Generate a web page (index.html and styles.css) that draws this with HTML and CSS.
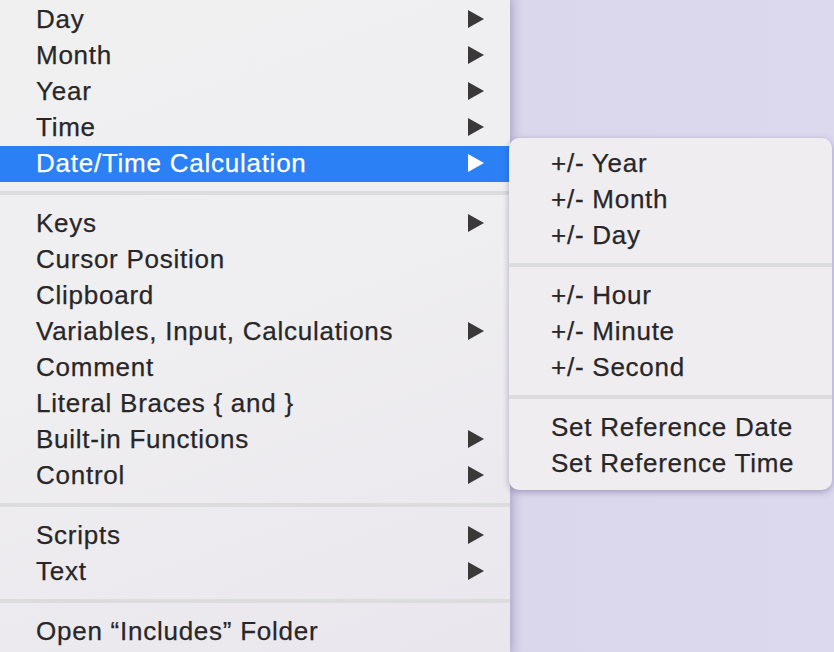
FILE: index.html
```html
<!DOCTYPE html>
<html lang="en">
<head>
  <meta charset="UTF-8" />
  <title>Insert Menu</title>
  <link rel="stylesheet" href="styles.css">
</head>
<body>
  <div class="screen">
    <div class="menu">
      <div class="item sub">Day</div>
      <div class="item sub">Month</div>
      <div class="item sub">Year</div>
      <div class="item sub">Time</div>
      <div class="item sub active">Date/Time Calculation</div>
      <div class="sep"></div>
      <div class="item sub">Keys</div>
      <div class="item">Cursor Position</div>
      <div class="item">Clipboard</div>
      <div class="item sub">Variables, Input, Calculations</div>
      <div class="item">Comment</div>
      <div class="item">Literal Braces { and }</div>
      <div class="item sub">Built-in Functions</div>
      <div class="item sub">Control</div>
      <div class="sep"></div>
      <div class="item sub">Scripts</div>
      <div class="item sub">Text</div>
      <div class="sep"></div>
      <div class="item">Open “Includes” Folder</div>
    </div>
    <div class="desk">
      <div class="submenu">
        <div class="item">+/- Year</div>
        <div class="item">+/- Month</div>
        <div class="item">+/- Day</div>
        <div class="sep"></div>
        <div class="item">+/- Hour</div>
        <div class="item">+/- Minute</div>
        <div class="item">+/- Second</div>
        <div class="sep"></div>
        <div class="item">Set Reference Date</div>
        <div class="item">Set Reference Time</div>
      </div>
    </div>
  </div>
</body>
</html>
```

FILE: styles.css
```css
body {
  margin: 0;
  font-family: 'Liberation Sans', Arial, sans-serif;
  overflow: hidden;
}

.screen {
  display: flex;
  width: 834px;
  height: 652px;
  background-color: #dad6ec;
}

.menu {
  width: 510px;
  flex-shrink: 0;
  padding-top: 2px;
  box-sizing: border-box;
  background: linear-gradient(160deg, #f1f0f1 0%, #efeef0 45%, #e9e7ed 100%);
  box-shadow: 2px 0 8px rgba(60, 50, 110, 0.25);
  position: relative;
  z-index: 1;
}

.desk {
  flex: 1;
  position: relative;
  background: linear-gradient(90deg, #d2cde6 0px, #dad6ec 14px, #dcd8ee 100%);
}

.item {
  height: 36px;
  line-height: 34px;
  padding-left: 36px;
  font-size: 26px;
  letter-spacing: 0.75px;
  color: #282627;
  -webkit-text-stroke: 0.25px #282627;
  position: relative;
  white-space: nowrap;
}

.sub::after {
  content: "";
  position: absolute;
  left: 468px;
  top: 8px;
  border-left: 16px solid #3a3839;
  border-top: 9px solid transparent;
  border-bottom: 9px solid transparent;
}

.item.active {
  background-color: #2a80f4;
  color: #fff;
  -webkit-text-stroke: 0.25px #fff;
}

.item.active::after {
  border-left-color: #fff;
}

.sep {
  height: 24px;
  display: flex;
  align-items: center;
}

.sep::before {
  content: "";
  display: block;
  width: 100%;
  height: 4px;
  margin-top: -2px;
  background-color: #dcdbdd;
}

.submenu {
  position: absolute;
  left: -1px;
  top: 138px;
  width: 323px;
  padding: 8px 0 8px;
  background-color: #efedf0;
  border-radius: 10px;
  box-shadow: 0 2px 6px rgba(50, 40, 100, 0.35);
  z-index: 2;
}

.submenu .item {
  padding-left: 42px;
}
```
